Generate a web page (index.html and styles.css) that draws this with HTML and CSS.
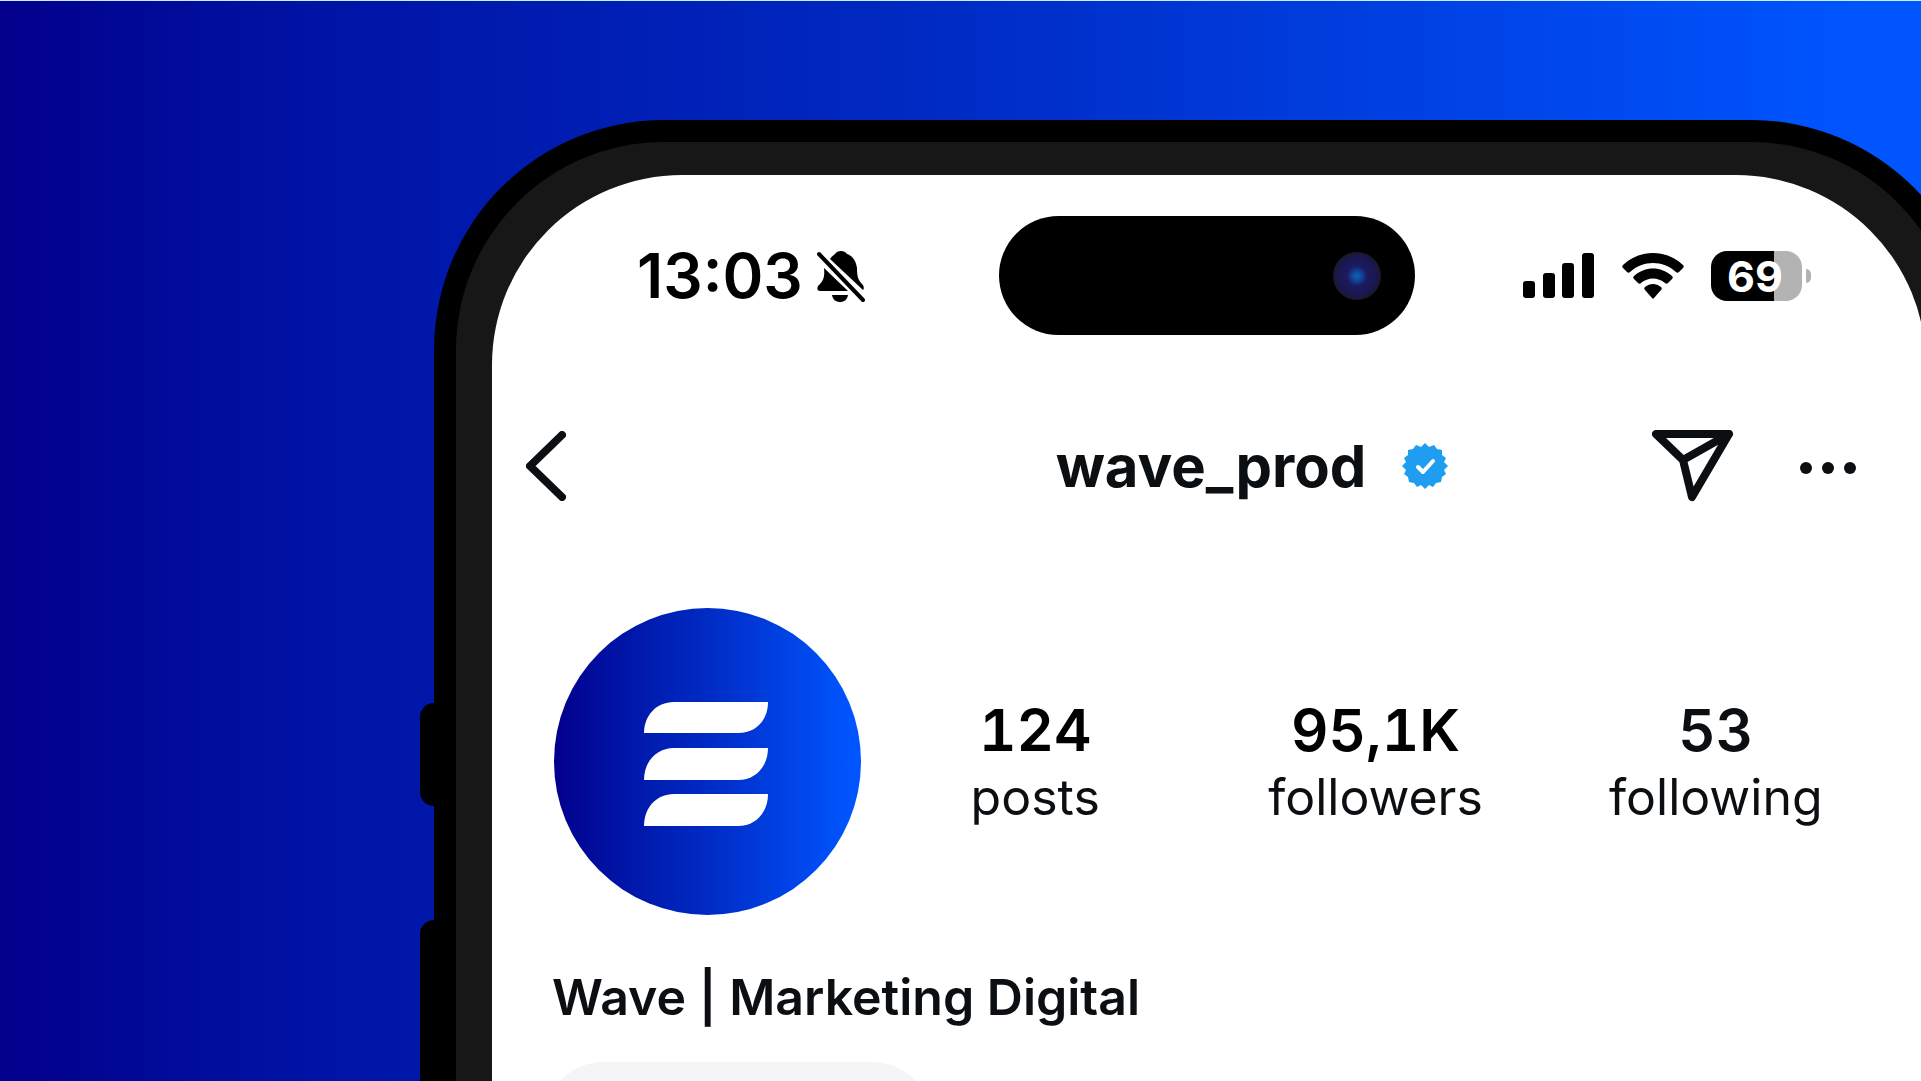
FILE: index.html
```html
<!DOCTYPE html>
<html lang="en">
<head>
<meta charset="utf-8">
<meta name="viewport" content="width=device-width, initial-scale=1">
<title>wave_prod</title>
<link rel="stylesheet" href="styles.css">
</head>
<body>
<main class="stage">
  <div class="phone">
    <span class="side-key side-key-upper"></span>
    <span class="side-key side-key-lower"></span>
    <div class="bezel">
      <div class="screen">
        <div class="status">
          <div class="status-left">
            <time class="clock">13:03</time>
            <svg class="bell" viewBox="0 0 48 52" aria-label="Silent mode">
              <path d="M13 9C15 6 17 5 18 4C20 0 28 0 30 4C36 6 39 11 40 18C40 27 41 30 46 35C47 37 47 39 46 40Z"/>
              <path d="M7 18L31 41H3C0 41 0 38 1 36C6 31 8 28 7 18Z"/>
              <path d="M15 45H31C30 50 27 52 23 52C19 52 16 50 15 45Z"/>
              <path class="slash" d="M2 4L46 50"/>
            </svg>
          </div>
          <div class="island"><span class="camera"></span></div>
          <div class="status-right">
            <svg class="signal" viewBox="0 0 72 46" aria-label="Signal">
              <rect x="0" y="28" width="12" height="17" rx="3"/>
              <rect x="20" y="20" width="12" height="25" rx="3"/>
              <rect x="39" y="10" width="12" height="35" rx="3"/>
              <rect x="59" y="0" width="12" height="45" rx="3"/>
            </svg>
            <svg class="wifi" viewBox="0 0 62 46" aria-label="Wi-Fi">
              <path d="M1 12C18 -4 44 -4 61 12C62 13 62 14 61 15L57 19C56 20 55 20 54 19C41 7 21 7 8 19C7 20 6 20 5 19L1 15C0 14 0 13 1 12Z"/>
              <path d="M12 23C23 13 39 13 50 23C51 24 51 25 50 26L46 30C45 31 44 31 43 30C36 24 26 24 19 30C18 31 17 31 16 30L12 26C11 25 11 24 12 23Z"/>
              <path d="M23 34C28 30 34 30 39 34C40 35 40 36 39 37L32 45C31 46 31 46 30 45L23 37C22 36 22 35 23 34Z"/>
            </svg>
            <div class="battery">
              <span class="battery-body">69</span>
              <span class="battery-tip"></span>
            </div>
          </div>
        </div>

        <header class="bar">
          <button class="icon-button" type="button" aria-label="Back">
            <svg class="back" viewBox="0 0 40 70"><path d="M36 4L4 35L36 66"/></svg>
          </button>
          <h1 class="handle">wave_prod</h1>
          <div class="bar-end">
            <svg class="verified" viewBox="0 0 46 46" aria-label="Verified">
              <path class="seal" d="M23 0L27 4L32 2L35 6L40 7L40 12L44 15L42 19L46 23L42 27L44 31L40 34L39 39L34 40L31 44L27 42L23 46L19 42L15 44L12 40L7 39L6 34L2 31L4 27L0 23L4 19L2 15L6 12L6 7L11 6L14 2L19 4Z"/>
              <path class="tick" d="M16 24L21 29L31 18"/>
            </svg>
            <button class="icon-button send-button" type="button" aria-label="Share">
              <svg class="send" viewBox="0 0 82 72"><path d="M4 4H77L40 67L31 30ZM31 30L77 4"/></svg>
            </button>
            <button class="icon-button" type="button" aria-label="More options">
              <svg class="more" viewBox="0 0 56 16"><circle cx="6" cy="10" r="6"/><circle cx="28" cy="10" r="6"/><circle cx="50" cy="10" r="6"/></svg>
            </button>
          </div>
        </header>

        <section class="profile">
          <div class="avatar">
            <svg class="logo" viewBox="0 0 124 124" aria-label="Wave">
              <path d="M0 31C0 14 12 0 30 0H124C124 18 112 31 94 31Z"/>
              <path d="M0 78C0 60 12 46 30 46H124C124 64 112 78 94 78Z"/>
              <path d="M0 124C0 106 12 92 30 92H124C124 110 112 124 94 124Z"/>
            </svg>
          </div>
          <ul class="stats">
            <li class="stat"><strong class="count">124</strong><span class="label">posts</span></li>
            <li class="stat"><strong class="count">95,1K</strong><span class="label">followers</span></li>
            <li class="stat"><strong class="count count-soft">53</strong><span class="label">following</span></li>
          </ul>
        </section>
        <p class="bio">Wave | Marketing Digital</p>
        <div class="chip"></div>
      </div>
    </div>
  </div>
</main>
</body>
</html>
```
FILE: styles.css
```css
* {
  box-sizing: border-box;
}

body {
  margin: 0;
  font-family: Inter, "Liberation Sans", sans-serif;
  color: #0c0f12;
}

.stage {
  height: 100vh;
  overflow: hidden;
  padding: 119px 0 0 434px;
  border-top: 1px solid #c8efff;
  background: linear-gradient(90deg, #03008c, #0013a4 16%, #0029c2 47%, #0040e2 73%, #0055ff 97%);
}

/* Device */
.phone {
  position: relative;
  margin-right: -60px;
  padding: 22px 22px 0;
  border-radius: 230px 230px 0 0;
  background: #000;
}

.side-key {
  position: absolute;
  left: -14px;
  width: 30px;
  border-radius: 14px;
  background: #000;
}

.side-key-upper {
  top: 583px;
  height: 103px;
}

.side-key-lower {
  top: 800px;
  height: 200px;
}

.bezel {
  padding: 33px 33px 0 36px;
  border-radius: 208px 208px 0 0;
  background: #171717;
}

.screen {
  padding-top: 41px;
  border-radius: 190px 190px 0 0;
  background: #fff;
}

/* Status bar */
.status {
  display: grid;
  grid-template-columns: 1fr auto 1fr;
  align-items: center;
  padding-right: 4px;
  color: #000;
}

.status-left,
.status-right {
  display: flex;
  align-items: center;
}

.status-left {
  gap: 14px;
  padding-left: 145px;
}

.status-right {
  justify-content: flex-end;
  gap: 27px;
  padding-right: 111px;
}

.clock {
  font-size: 62px;
  font-weight: 600;
  line-height: 64px;
}

.bell {
  width: 48px;
  height: 52px;
}

.slash {
  fill: none;
  stroke: #000;
  stroke-width: 4px;
  stroke-linecap: round;
}

.island {
  display: flex;
  align-items: center;
  justify-content: flex-end;
  width: 416px;
  height: 119px;
  padding-right: 34px;
  border-radius: 60px;
  background: #000;
}

.camera {
  width: 48px;
  height: 48px;
  border-radius: 50%;
  background: radial-gradient(circle closest-side, #0a66b4 0, #10459a 20%, #1b1b60 42%, #1b164e 82%, #1a1a24 100%);
}

.signal {
  width: 72px;
  height: 46px;
}

.wifi {
  width: 62px;
  height: 46px;
}

.battery {
  display: flex;
  align-items: center;
  gap: 4px;
}

.battery-body {
  width: 91px;
  padding-right: 3px;
  border-radius: 16px;
  background: linear-gradient(90deg, #000 69%, #b3b3b3 69%);
  color: #fff;
  font-size: 43px;
  font-weight: 700;
  line-height: 50px;
  text-align: center;
}

.battery-tip {
  width: 5px;
  height: 14px;
  border-radius: 0 5px 5px 0;
  background: #b3b3b3;
}

/* Profile header */
.bar {
  display: grid;
  grid-template-columns: 1fr auto 1fr;
  align-items: center;
  margin-top: 93px;
  padding: 0 30px 0 34px;
}

.icon-button {
  justify-self: start;
  display: flex;
  padding: 0;
  border: 0;
  background: none;
  cursor: pointer;
}

.back,
.send {
  fill: none;
  stroke: #0c0f12;
  stroke-width: 8px;
  stroke-linecap: round;
  stroke-linejoin: round;
}

.back {
  width: 40px;
  height: 70px;
}

.handle {
  margin: 0;
  font-size: 58px;
  font-weight: 700;
  line-height: 76px;
}

.bar-end {
  display: flex;
  align-items: center;
  padding-right: 40px;
}

.verified {
  width: 46px;
  height: 46px;
  margin-left: 36px;
}

.seal {
  fill: #1f9df0;
}

.tick {
  fill: none;
  stroke: #fff;
  stroke-width: 4px;
  stroke-linecap: round;
  stroke-linejoin: round;
}

.send-button {
  margin: 0 66px 0 auto;
}

.send {
  width: 82px;
  height: 72px;
}

.more {
  width: 56px;
  height: 16px;
  fill: #0c0f12;
}

/* Profile summary */
.profile {
  display: flex;
  align-items: center;
  gap: 4px;
  margin-top: 104px;
  padding: 0 40px 0 62px;
}

.avatar {
  display: flex;
  flex: none;
  align-items: center;
  justify-content: center;
  width: 307px;
  height: 307px;
  padding: 4px 4px 0 0;
  border-radius: 50%;
  background: linear-gradient(90deg, #03008c, #0013a4 20%, #0029c2 48%, #0040e2 73%, #0055ff 97%);
}

.logo {
  width: 124px;
  height: 124px;
  fill: #fff;
}

.stats {
  display: grid;
  flex: 1;
  grid-template-columns: repeat(3, 1fr);
  margin: 0;
  padding: 0;
  list-style: none;
}

.stat {
  display: flex;
  flex-direction: column;
  align-items: center;
}

.count {
  color: #000;
  font-size: 58px;
  font-weight: 600;
  font-variant-numeric: tabular-nums;
  line-height: 70px;
}

.count-soft {
  color: #0c0f12;
}

.label {
  font-size: 50px;
  line-height: 64px;
}

.bio {
  margin: 50px 0 0;
  padding-left: 60px;
  font-size: 50px;
  font-weight: 600;
  line-height: 64px;
}

.chip {
  width: 388px;
  height: 120px;
  margin: 33px 0 0 52px;
  border-radius: 60px;
  background: #f3f5f6;
}
```
